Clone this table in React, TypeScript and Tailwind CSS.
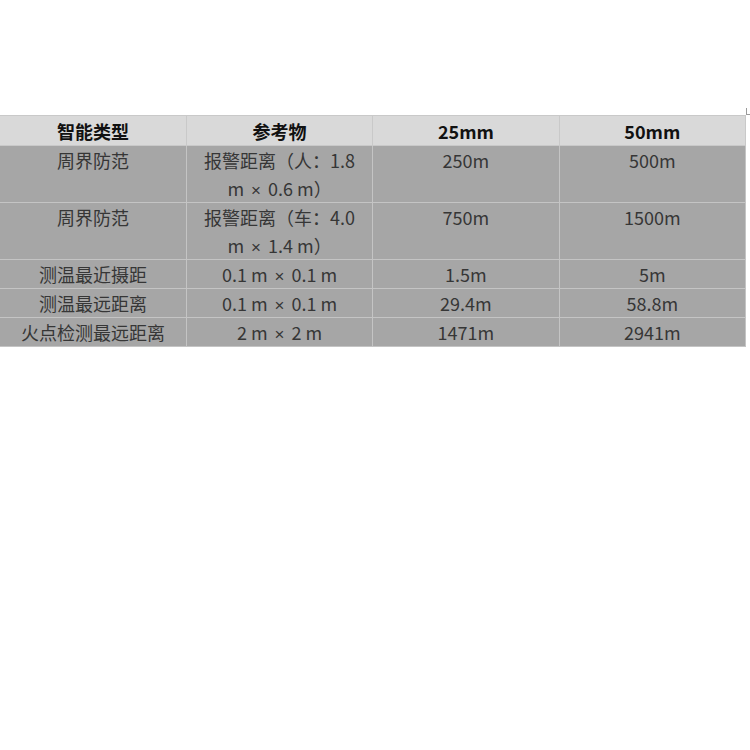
const font = '"Noto Sans CJK SC", "Liberation Sans", sans-serif';

type Row = { type: string; ref: string[]; a: string; b: string };

const rows: Row[] = [
  { type: '周界防范', ref: ['报警距离（人：1.8', 'm × 0.6 m）'], a: '250m', b: '500m' },
  { type: '周界防范', ref: ['报警距离（车：4.0', 'm × 1.4 m）'], a: '750m', b: '1500m' },
  { type: '测温最近摄距', ref: ['0.1 m × 0.1 m'], a: '1.5m', b: '5m' },
  { type: '测温最远距离', ref: ['0.1 m × 0.1 m'], a: '29.4m', b: '58.8m' },
  { type: '火点检测最远距离', ref: ['2 m × 2 m'], a: '1471m', b: '2941m' },
];

const headers = ['智能类型', '参考物', '25mm', '50mm'];

// the multiplication sign is drawn small, with a bit of air on both sides
function RefText({ text }: { text: string }) {
  const parts = text.split(' × ');
  if (parts.length < 2) return <>{text}</>;
  return (
    <>
      {parts[0]}
      <span className="mx-[7px] text-[17px] leading-none" style={{ fontFamily: '"Liberation Sans", sans-serif' }}>
        ×
      </span>
      {parts[1]}
    </>
  );
}

export default function App() {
  return (
    <div className="w-[750px] h-[750px] bg-white pt-[108px]" style={{ fontFamily: font }}>
      <div className="flex items-start">
        <table className="mt-[7px] w-[746px] border-collapse table-fixed text-[18px]">
          <thead>
            <tr className="bg-[#d9d9d9]">
              {headers.map((h, i) => (
                <th
                  key={i}
                  className="h-[30px] p-0 border border-[#c9c9c9] border-l-0 font-bold text-[#111] leading-[28px] text-center align-middle"
                >
                  {h}
                </th>
              ))}
            </tr>
          </thead>
          <tbody>
            {rows.map((r, i) => (
              <tr key={i} className="bg-[#a6a6a6] text-[#363636]">
                <td className="p-0 border border-[#c4c4c4] border-l-0 text-center align-top leading-[28px]">{r.type}</td>
                <td className="p-0 border border-[#c4c4c4] text-center align-top leading-[28px]">
                  {r.ref.map((line, j) => (
                    <div key={j} className="h-[28px]">
                      <RefText text={line} />
                    </div>
                  ))}
                </td>
                <td className="p-0 border border-[#c4c4c4] text-center align-top leading-[28px]">{r.a}</td>
                <td className="p-0 border border-[#c4c4c4] text-center align-top leading-[28px]">{r.b}</td>
              </tr>
            ))}
          </tbody>
        </table>
        <div className="w-[4px] h-[7px] border-l border-b border-[#9a9a9a]" />
      </div>
    </div>
  );
}
